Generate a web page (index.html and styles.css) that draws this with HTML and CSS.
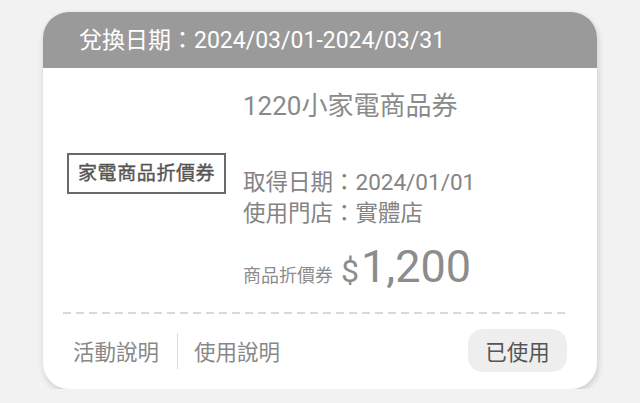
FILE: index.html
```html
<!DOCTYPE html>
<html lang="zh-Hant">
<head>
    <meta charset="UTF-8">
    <meta name="viewport" content="width=device-width, initial-scale=1.0">
    <title>優惠券</title>
    <link rel="stylesheet" href="styles.css">
</head>
<body>
    <!-- Coupon Card -->
    <div class="coupon">
        <div class="coupon-head">兌換日期：2024/03/01-2024/03/31</div>

        <div class="coupon-body">
            <div class="coupon-left">
                <span class="tag">家電商品折價券</span>
            </div>
            <div class="coupon-info">
                <div class="title">1220小家電商品券</div>
                <div class="rows">
                    <div class="row">取得日期：2024/01/01</div>
                    <div class="row">使用門店：實體店</div>
                </div>
                <div class="amount">
                    <span class="amount-label">商品折價券</span>
                    <span class="currency">$</span><span class="value">1,200</span>
                </div>
            </div>
        </div>

        <div class="coupon-foot">
            <div class="links">
                <a href="#" class="link">活動說明</a>
                <span class="sep"></span>
                <a href="#" class="link">使用說明</a>
            </div>
            <button class="status-btn">已使用</button>
        </div>
    </div>
</body>
</html>
```

FILE: styles.css
```css
/* General */
body {
    margin: 0;
    padding: 12px 0 0 43px;
    background-color: #f2f2f2;
    font-family: Roboto, "Noto Sans CJK TC", sans-serif;
}

/* Card */
.coupon {
    width: 554px;
    background-color: #fff;
    border-radius: 26px;
    overflow: hidden;
    box-shadow: 1px 3px 6px rgba(0, 0, 0, 0.16);
}
.coupon-head {
    height: 56px;
    line-height: 58px;
    padding-left: 36px;
    background-color: #9a9a9a;
    color: #fff;
    font-size: 23px;
}

/* Body */
.coupon-body {
    display: flex;
    padding: 0 24px;
}
.coupon-left {
    width: 176px;
    padding-top: 85px;
}
.tag {
    display: inline-block;
    padding: 6px 9px 6px 9px;
    border: 2px solid #6a6a6a;
    color: #555;
    font-size: 19px;
    -webkit-text-stroke: 0.4px #555;
    letter-spacing: 0.6px;
    line-height: 25px;
}
.coupon-info {
    padding-top: 23px;
    color: #848484;
}
.title {
    font-size: 26px;
    line-height: 30px;
    color: #8a8a8a;
}
.rows {
    margin-top: 46px;
}
.row {
    font-size: 22.5px;
    line-height: 31px;
}
.amount {
    display: flex;
    align-items: baseline;
    margin-top: 13px;
    line-height: 50px;
    color: #8c8c8c;
}
.amount-label {
    font-size: 18px;
    margin-right: 8px;
}
.currency {
    font-size: 32px;
    margin-right: 2px;
}
.value {
    font-size: 45px;
}

/* Footer */
.coupon-foot {
    display: flex;
    justify-content: space-between;
    align-items: center;
    margin: 11px 30px 0 20px;
    padding: 17px 0 17px 10px;
    background: repeating-linear-gradient(to right, #d9d9d9 0 8px, transparent 8px 13px) top left / 100% 2px no-repeat;
}
.links {
    display: flex;
    align-items: center;
}
.link {
    color: #888;
    font-size: 21.5px;
    text-decoration: none;
}
.sep {
    width: 1px;
    height: 36px;
    margin: 0 16px 0 18px;
    background-color: #dcdcdc;
}
.status-btn {
    width: 99px;
    height: 43px;
    border: none;
    border-radius: 15px;
    background-color: #eeeeee;
    color: #555;
    font-family: inherit;
    font-size: 21.5px;
    padding: 0;
}
```
